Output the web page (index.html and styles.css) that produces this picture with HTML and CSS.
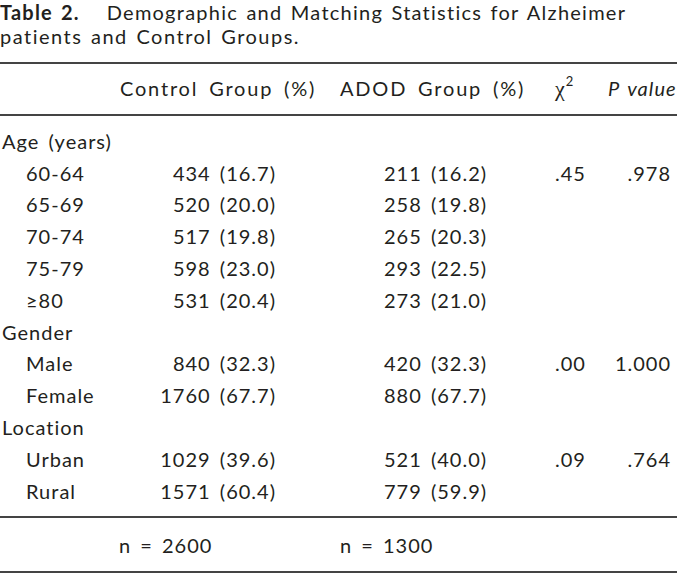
FILE: index.html
```html
<!DOCTYPE html>
<html lang="en">
<head>
<meta charset="utf-8">
<title>Table 2</title>
<link rel="stylesheet" href="styles.css">
</head>
<body>
<div class="page">
  <p class="caption">
    <span class="cap-line"><span class="label">Table 2.</span><span class="title">Demographic and Matching Statistics for Alzheimer</span></span>
    <span class="cap-line">patients and Control Groups.</span>
  </p>
  <table class="stats">
    <colgroup>
      <col class="c-label"><col class="c-ctrl"><col class="c-adod"><col class="c-chi"><col class="c-p">
    </colgroup>
    <thead>
      <tr>
        <th></th>
        <th class="h-ctrl">Control Group (%)</th>
        <th class="h-adod">ADOD Group (%)</th>
        <th class="h-chi"><span class="chi">χ</span><sup>2</sup></th>
        <th class="h-p"><em>P value</em></th>
      </tr>
    </thead>
    <tbody>
      <tr class="first"><td class="grp">Age (years)</td><td></td><td></td><td></td><td></td></tr>
      <tr><td class="sub">60-64</td><td class="ctrl">434 (16.7)</td><td class="adod">211 (16.2)</td><td class="chi-v">.45</td><td class="p">.978</td></tr>
      <tr><td class="sub">65-69</td><td class="ctrl">520 (20.0)</td><td class="adod">258 (19.8)</td><td></td><td></td></tr>
      <tr><td class="sub">70-74</td><td class="ctrl">517 (19.8)</td><td class="adod">265 (20.3)</td><td></td><td></td></tr>
      <tr><td class="sub">75-79</td><td class="ctrl">598 (23.0)</td><td class="adod">293 (22.5)</td><td></td><td></td></tr>
      <tr><td class="sub">≥80</td><td class="ctrl">531 (20.4)</td><td class="adod">273 (21.0)</td><td></td><td></td></tr>
      <tr><td class="grp">Gender</td><td></td><td></td><td></td><td></td></tr>
      <tr><td class="sub">Male</td><td class="ctrl">840 (32.3)</td><td class="adod">420 (32.3)</td><td class="chi-v">.00</td><td class="p">1.000</td></tr>
      <tr><td class="sub">Female</td><td class="ctrl">1760 (67.7)</td><td class="adod">880 (67.7)</td><td></td><td></td></tr>
      <tr><td class="grp">Location</td><td></td><td></td><td></td><td></td></tr>
      <tr><td class="sub">Urban</td><td class="ctrl">1029 (39.6)</td><td class="adod">521 (40.0)</td><td class="chi-v">.09</td><td class="p">.764</td></tr>
      <tr class="last"><td class="sub">Rural</td><td class="ctrl">1571 (60.4)</td><td class="adod">779 (59.9)</td><td></td><td></td></tr>
    </tbody>
    <tfoot>
      <tr>
        <td></td>
        <td class="n">n = 2600</td>
        <td class="n">n = 1300</td>
        <td></td>
        <td></td>
      </tr>
    </tfoot>
  </table>
</div>
</body>
</html>
```

FILE: styles.css
```css
html, body {
  margin: 0;
  padding: 0;
  background: #ffffff;
}

.page {
  width: 677px;
  font-family: "Lato", "Liberation Sans", sans-serif;
  font-size: 20px;
  color: #231f20;
}

.caption {
  margin: 0;
  line-height: 24px;
  width: 677px;
  letter-spacing: 1.25px;
  word-spacing: 2px;
}

.cap-line {
  display: block;
  white-space: nowrap;
}

.cap-line + .cap-line {
  letter-spacing: 1.5px;
}

.caption .label {
  font-weight: 700;
  letter-spacing: 1.2px;
  margin-right: 27px;
}

.stats {
  width: 677px;
  border-collapse: collapse;
  table-layout: fixed;
  margin-top: 14px;
  line-height: 31.8px;
  letter-spacing: 1px;
  word-spacing: 3px;
}

.c-label { width: 119px; }
.c-ctrl { width: 221px; }
.c-adod { width: 215px; }
.c-chi { width: 53px; }
.c-p { width: 69px; }

.stats th,
.stats td {
  padding: 0;
  font-weight: 400;
  white-space: nowrap;
  text-align: left;
}

.stats thead th {
  border-top: 2px solid #444444;
  border-bottom: 2px solid #444444;
  padding: 9px 0;
  letter-spacing: 1.8px;
  word-spacing: 4px;
}

.h-ctrl { padding-left: 1px !important; }
.h-chi { padding-left: 0; letter-spacing: 0 !important; }
.h-p {
  text-align: right !important;
  padding-right: 1px !important;
  letter-spacing: 1.1px !important;
  word-spacing: 2px !important;
}

.chi {
  font-family: "Liberation Serif", "DejaVu Serif", serif;
  font-size: 22px;
}

sup {
  font-size: 13px;
  line-height: 0;
  vertical-align: 10px;
  margin-left: 1px;
}

.stats tbody tr.first td { padding-top: 10px; }
.stats tbody tr.last td { padding-bottom: 9px; }

.grp { padding-left: 2px !important; }
.sub { padding-left: 26px !important; }

.ctrl {
  text-align: right !important;
  padding-right: 64px !important;
}

.adod { padding-left: 44px !important; }

.p {
  text-align: right !important;
  padding-right: 6px !important;
}

.stats tfoot td {
  border-top: 2px solid #444444;
  border-bottom: 2px solid #444444;
  padding: 12px 0 9px 0;
}
```
